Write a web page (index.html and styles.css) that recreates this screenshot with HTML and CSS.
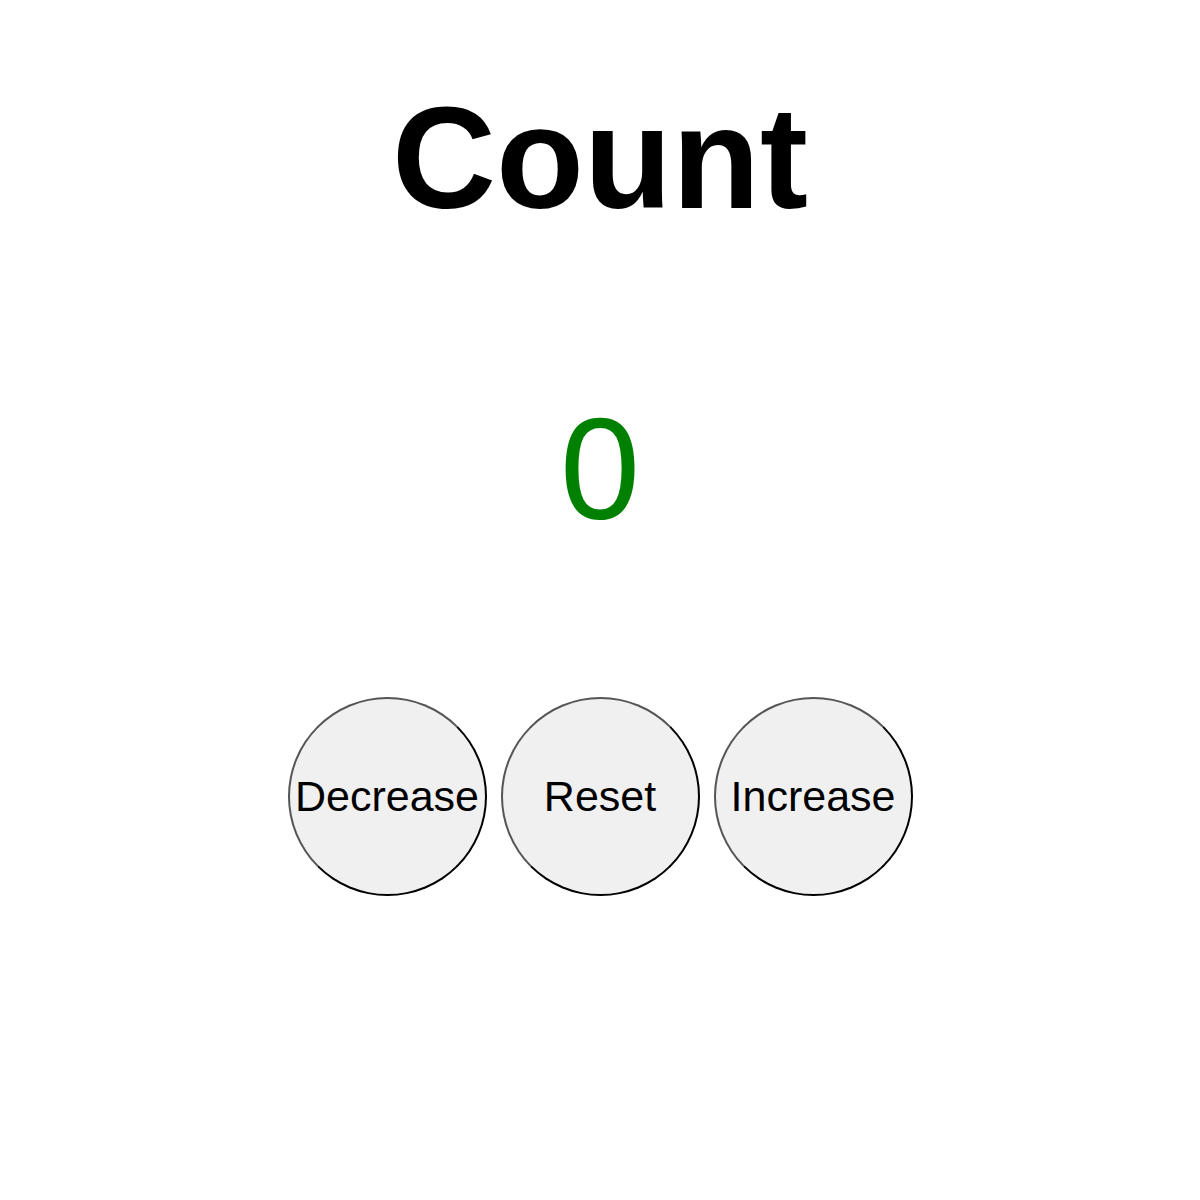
FILE: index.html
```html
<!DOCTYPE html>
<html>
<head>
<meta charset="utf-8">
<link rel="stylesheet" href="styles.css">
</head>
<body>
<main class="counter">
  <h1 class="title">Count</h1>
  <div class="value">0</div>
  <div class="controls">
    <button class="btn">Decrease</button>
    <button class="btn">Reset</button>
    <button class="btn">Increase</button>
  </div>
</main>
</body>
</html>
```
FILE: styles.css
```css
html, body {
  margin: 0;
  padding: 0;
  background: #ffffff;
}
body {
  font-family: "Liberation Sans", Arial, sans-serif;
}
.counter {
  display: flex;
  flex-direction: column;
  align-items: center;
  padding-top: 76px;
}
.title {
  margin: 0;
  font-size: 144px;
  font-weight: bold;
  color: #000;
  line-height: 165px;
}
.value {
  margin-top: 146px;
  font-size: 144px;
  color: #008000;
  line-height: 165px;
}
.controls {
  margin-top: 145px;
  display: flex;
  gap: 14px;
}
.btn {
  width: 199px;
  height: 199px;
  border-radius: 50%;
  border: 2px solid;
  border-color: #555555 #000000 #000000 #555555;
  background: #f0f0f0;
  color: #000;
  font-family: "Liberation Sans", Arial, sans-serif;
  font-size: 43px;
  padding: 0;
}
```
